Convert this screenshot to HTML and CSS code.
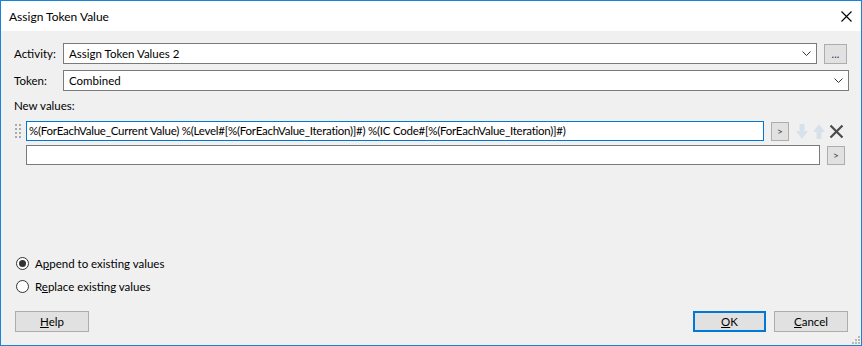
FILE: index.html
```html
<!DOCTYPE HTML>
<html>
	<head>
		<meta charset="utf-8">
		<link rel="stylesheet" href="styles.css">
	</head>
	<body>
		<div class="window">
			<div class="title-bar">
				<span class="title-text">Assign Token Value</span>
				<svg class="close-icon" width="11" height="11" viewBox="0 0 11 11">
					<path d="M0.5 0.5 L10.5 10.5 M10.5 0.5 L0.5 10.5" stroke="#000" stroke-width="1.1" fill="none"/>
				</svg>
			</div>
			<div class="content">
				<div class="field-row">
					<div class="field-label">Activity:</div>
					<div class="combo">
						<span class="combo-text">Assign Token Values 2</span>
						<svg class="chevron" width="9" height="5" viewBox="0 0 9 5"><path d="M0.5 0.5 L4.5 4.5 L8.5 0.5" stroke="#333" fill="none"/></svg>
					</div>
					<div class="small-button ellipsis-button">...</div>
				</div>
				<div class="field-row token-row">
					<div class="field-label">Token:</div>
					<div class="combo">
						<span class="combo-text">Combined</span>
						<svg class="chevron" width="9" height="5" viewBox="0 0 9 5"><path d="M0.5 0.5 L4.5 4.5 L8.5 0.5" stroke="#333" fill="none"/></svg>
					</div>
				</div>
				<div class="section-label">New values:</div>
				<div class="value-row first-value">
					<div class="grip">
						<svg width="6" height="14" viewBox="0 0 6 14">
							<rect x="0" y="0" width="2" height="2" fill="#a9a9a9"/>
							<rect x="4" y="0" width="2" height="2" fill="#a9a9a9"/>
							<rect x="0" y="4" width="2" height="2" fill="#a9a9a9"/>
							<rect x="4" y="4" width="2" height="2" fill="#a9a9a9"/>
							<rect x="0" y="8" width="2" height="2" fill="#a9a9a9"/>
							<rect x="4" y="8" width="2" height="2" fill="#a9a9a9"/>
							<rect x="0" y="12" width="2" height="2" fill="#a9a9a9"/>
							<rect x="4" y="12" width="2" height="2" fill="#a9a9a9"/>
						</svg>
					</div>
					<div class="textbox focused">%(ForEachValue_Current Value) %(Level#[%(ForEachValue_Iteration)]#) %(IC Code#[%(ForEachValue_Iteration)]#)</div>
					<div class="small-button arrow-button">&gt;</div>
					<svg class="move-down" width="12" height="15" viewBox="0 0 12 15">
						<path d="M3.5 0 H8.5 V7 H12 L6 15 L0 7 H3.5 Z" fill="#d7e1eb"/>
					</svg>
					<svg class="move-up" width="12" height="15" viewBox="0 0 12 15">
						<path d="M3.5 15 H8.5 V8 H12 L6 0 L0 8 H3.5 Z" fill="#d7e1eb"/>
					</svg>
					<svg class="remove-icon" width="15" height="15" viewBox="0 0 15 15">
						<path d="M1.5 1.5 L13.5 13.5 M13.5 1.5 L1.5 13.5" stroke="#4b4b4b" stroke-width="2.2" fill="none"/>
					</svg>
				</div>
				<div class="value-row second-value">
					<div class="grip"></div>
					<div class="textbox"></div>
					<div class="small-button arrow-button">&gt;</div>
				</div>
				<div class="spacer"></div>
				<div class="radio-row">
					<span class="radio checked"></span>
					<span class="radio-text">A<u>p</u>pend to existing values</span>
				</div>
				<div class="radio-row second-radio">
					<span class="radio"></span>
					<span class="radio-text">R<u>e</u>place existing values</span>
				</div>
				<div class="button-row">
					<div class="button"><u>H</u>elp</div>
					<div class="button-gap"></div>
					<div class="button default-button"><u>O</u>K</div>
					<div class="button"><u>C</u>ancel</div>
				</div>
			</div>
			<svg class="size-grip" width="8" height="8" viewBox="0 0 8 8">
				<rect x="6" y="0" width="2" height="2" fill="#b8b8b8"/>
				<rect x="3" y="3" width="2" height="2" fill="#b8b8b8"/>
				<rect x="6" y="3" width="2" height="2" fill="#b8b8b8"/>
				<rect x="0" y="6" width="2" height="2" fill="#b8b8b8"/>
				<rect x="3" y="6" width="2" height="2" fill="#b8b8b8"/>
				<rect x="6" y="6" width="2" height="2" fill="#b8b8b8"/>
			</svg>
		</div>
	</body>
</html>
```
FILE: styles.css
```css
html, body{
	margin: 0;
	padding: 0;
	font-family: 'Lato', sans-serif;
	font-size: 11.5px;
	color: black;
}
.window{
	position: relative;
	width: 862px;
	height: 346px;
	box-sizing: border-box;
	border: 1px solid #1883d7;
	background-color: #f0f0f0;
	display: flex;
	flex-direction: column;
}
.title-bar{
	height: 30px;
	background-color: white;
	display: flex;
	align-items: center;
	padding-left: 8px;
	padding-right: 9px;
	font-size: 12px;
}
.title-text{
	flex: 1;
}
.content{
	flex: 1;
	display: flex;
	flex-direction: column;
	padding: 12px 12px 13px 13px;
}
.field-row{
	display: flex;
	align-items: center;
	height: 21px;
}
.token-row{
	margin-top: 6px;
}
.field-label{
	width: 49px;
}
.combo{
	flex: 1;
	height: 21px;
	box-sizing: border-box;
	border: 1px solid #7a7a7a;
	background-color: white;
	display: flex;
	align-items: center;
	padding-left: 5px;
	padding-right: 5px;
}
.combo-text{
	flex: 1;
}
.small-button{
	box-sizing: border-box;
	border: 1px solid #adadad;
	background-color: #e1e1e1;
	display: flex;
	align-items: center;
	justify-content: center;
}
.ellipsis-button{
	width: 23px;
	height: 20px;
	margin-left: 7px;
	margin-right: 2px;
	color: #4a2a5a;
	font-size: 11px;
	line-height: 1;
}
.section-label{
	margin-top: 7px;
	line-height: 16px;
}
.value-row{
	display: flex;
	align-items: center;
	height: 20px;
}
.first-value{
	margin-top: 7px;
	padding-right: 5px;
}
.second-value{
	margin-top: 4px;
	padding-right: 4px;
}
.grip{
	width: 12px;
	padding-left: 1px;
	box-sizing: border-box;
	display: flex;
	align-items: center;
}
.textbox{
	flex: 1;
	height: 20px;
	box-sizing: border-box;
	border: 1px solid #7a7a7a;
	background-color: white;
	padding-left: 2px;
	line-height: 18px;
	letter-spacing: -0.25px;
	white-space: nowrap;
	overflow: hidden;
}
.textbox.focused{
	border-color: #0078d7;
}
.arrow-button{
	width: 18px;
	height: 19px;
	margin-left: 7px;
	font-size: 10px;
	color: #3a3a3a;
}
.move-down{
	margin-left: 7px;
}
.move-up{
	margin-left: 5px;
}
.remove-icon{
	margin-left: 4px;
}
.spacer{
	flex: 1;
}
.radio-row{
	display: flex;
	align-items: center;
	height: 15px;
}
.second-radio{
	margin-top: 8px;
}
.radio{
	width: 13px;
	height: 13px;
	box-sizing: border-box;
	border: 1px solid #333;
	border-radius: 50%;
	background-color: white;
	margin-left: 2px;
	margin-right: 6px;
	display: flex;
	align-items: center;
	justify-content: center;
}
.radio.checked::after{
	content: "";
	width: 7px;
	height: 7px;
	border-radius: 50%;
	background-color: #333;
}
.button-row{
	display: flex;
	margin-top: 17px;
	padding-left: 1px;
	padding-right: 1px;
}
.button-gap{
	flex: 1;
}
.button{
	width: 74px;
	height: 21px;
	box-sizing: border-box;
	border: 1px solid #adadad;
	background-color: #e1e1e1;
	display: flex;
	align-items: center;
	justify-content: center;
}
.default-button{
	border: 2px solid #0078d7;
	margin-right: 8px;
	width: 73px;
}
.size-grip{
	position: absolute;
	right: 1px;
	bottom: 1px;
}
```
